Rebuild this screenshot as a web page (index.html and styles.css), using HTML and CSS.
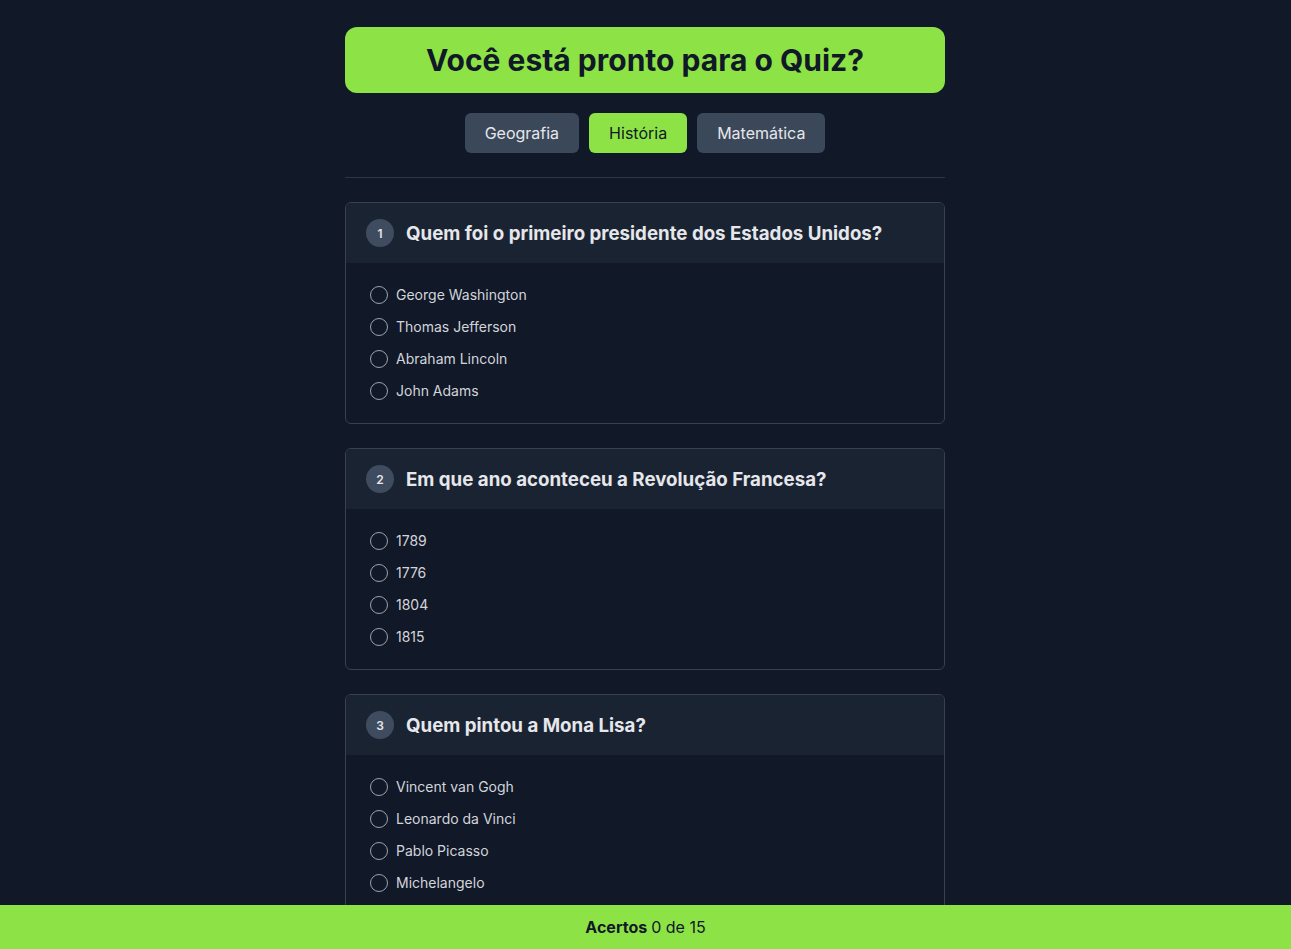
FILE: index.html
```html
<!DOCTYPE html>
<html lang="pt-BR">
<head>
<meta charset="utf-8">
<title>Quiz</title>
<link rel="stylesheet" href="styles.css">
</head>
<body>
<main class="container">
  <h1 class="title">Você está pronto para o Quiz?</h1>
  <nav class="tabs">
    <button class="tab">Geografia</button>
    <button class="tab active">História</button>
    <button class="tab">Matemática</button>
  </nav>
  <hr class="divider">

  <section class="card">
    <header class="card-head"><span class="num">1</span><h2>Quem foi o primeiro presidente dos Estados Unidos?</h2></header>
    <div class="options">
      <label class="opt"><span class="radio"></span>George Washington</label>
      <label class="opt"><span class="radio"></span>Thomas Jefferson</label>
      <label class="opt"><span class="radio"></span>Abraham Lincoln</label>
      <label class="opt"><span class="radio"></span>John Adams</label>
    </div>
  </section>

  <section class="card">
    <header class="card-head"><span class="num">2</span><h2>Em que ano aconteceu a Revolução Francesa?</h2></header>
    <div class="options">
      <label class="opt"><span class="radio"></span>1789</label>
      <label class="opt"><span class="radio"></span>1776</label>
      <label class="opt"><span class="radio"></span>1804</label>
      <label class="opt"><span class="radio"></span>1815</label>
    </div>
  </section>

  <section class="card">
    <header class="card-head"><span class="num">3</span><h2>Quem pintou a Mona Lisa?</h2></header>
    <div class="options">
      <label class="opt"><span class="radio"></span>Vincent van Gogh</label>
      <label class="opt"><span class="radio"></span>Leonardo da Vinci</label>
      <label class="opt"><span class="radio"></span>Pablo Picasso</label>
      <label class="opt"><span class="radio"></span>Michelangelo</label>
    </div>
  </section>
</main>
<footer class="footer"><strong>Acertos</strong> 0 de 15</footer>
</body>
</html>
```

FILE: styles.css
```css
* { box-sizing: border-box; }
html, body { margin: 0; padding: 0; }
body {
  background: #111827;
  font-family: Inter, "Noto Sans", sans-serif;
  color: #e5e7eb;
  min-height: 100vh;
  padding-right: 1px;
}
.container {
  width: 600px;
  margin: 0 auto;
  padding: 27px 0 80px;
}
.title {
  margin: 0;
  height: 66px;
  background: #8de346;
  color: #111827;
  border-radius: 12px;
  font-family: Inter, sans-serif;
  font-weight: 700;
  font-size: 30px;
  display: flex;
  align-items: center;
  justify-content: center;
}
.tabs {
  display: flex;
  justify-content: center;
  gap: 10px;
  margin-top: 20px;
}
.tab {
  height: 40px;
  padding: 0 20px;
  border: none;
  border-radius: 6px;
  background: #3b4859;
  color: #e5e7eb;
  font-family: Inter, sans-serif;
  font-size: 16px;
}
.tab.active {
  background: #8de346;
  color: #111827;
}
.divider {
  border: none;
  border-top: 1px solid #2d3744;
  margin: 24px 0 24px;
}
.card {
  border: 1px solid #374151;
  border-radius: 6px;
  overflow: hidden;
  margin-bottom: 24px;
}
.card-head {
  height: 60px;
  background: #1a2332;
  display: flex;
  align-items: center;
  padding: 0 20px;
  gap: 12px;
}
.num {
  width: 28px;
  height: 28px;
  border-radius: 50%;
  background: #3f4c5f;
  color: #e5e7eb;
  font-size: 12px;
  font-weight: 600;
  display: flex;
  align-items: center;
  justify-content: center;
  flex: none;
}
.card-head h2 {
  margin: 0;
  font-size: 18.7px;
  font-weight: 700;
  color: #e5e7eb;
}
.options {
  display: flex;
  flex-direction: column;
  gap: 8px;
  padding: 19.5px 24px 20.5px;
}
.opt {
  display: flex;
  align-items: center;
  gap: 8px;
  height: 24px;
  font-size: 14px;
  color: #d1d5db;
}
.radio {
  width: 18px;
  height: 18px;
  border: 1.5px solid #9ca3af;
  border-radius: 50%;
  flex: none;
}
.footer {
  position: fixed;
  left: 0;
  right: 0;
  bottom: 0;
  height: 44px;
  background: #8de346;
  color: #111827;
  display: flex;
  align-items: center;
  justify-content: center;
  gap: 4px;
  font-size: 16px;
}
.footer strong { font-weight: 700; }
```
